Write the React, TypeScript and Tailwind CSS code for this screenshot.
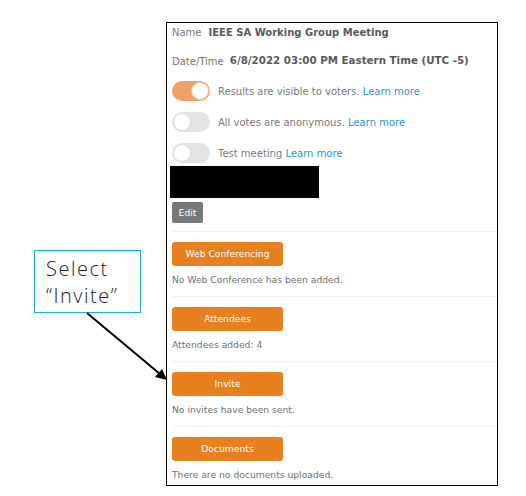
import React from 'react'

const font = { fontFamily: '"DejaVu Sans", Verdana, sans-serif' }

function Toggle({ on }: { on: boolean }) {
  return (
    <span
      className={
        on
          ? 'relative inline-block w-[38px] h-[20px] rounded-full bg-[#f2a066] shrink-0'
          : 'relative inline-block w-[38px] h-[20px] rounded-full bg-[#e3e3e3] shrink-0'
      }
    >
      <span
        className={
          on
            ? 'absolute top-[1px] right-[1px] w-[18px] h-[18px] rounded-full bg-white border border-[#f0c39d]'
            : 'absolute top-[1px] left-[1px] w-[18px] h-[18px] rounded-full bg-white border border-[#dedede]'
        }
      />
    </span>
  )
}

function ToggleRow({ on, label }: { on: boolean; label: string }) {
  return (
    <div className="flex items-center h-[20px] gap-[8px]">
      <Toggle on={on} />
      <span className="text-[10px] text-[#7a7a7a] whitespace-nowrap">
        {label} <span className="text-[#2a93e0]">Learn more</span>
      </span>
    </div>
  )
}

function Section({ title, note }: { title: string; note: string }) {
  return (
    <div className="ml-[5px] border-t border-[#efefef] pt-[10px] pb-[9px]">
      <button className="w-[111px] h-[24px] rounded-[3px] bg-[#e8801f] text-white text-[9.2px] block">
        {title}
      </button>
      <div className="mt-[7px] h-[14px] leading-[14px] text-[9.2px] text-[#707070] whitespace-nowrap">
        {note}
      </div>
    </div>
  )
}

export default function App() {
  return (
    <div className="relative w-[526px] h-[496px] bg-white flex" style={font}>
      <div className="pl-[34px] pt-[250px]">
        <div
          className="w-[107px] h-[63px] border border-[#1ab0d8] pl-[11px] pt-[4px] text-[20px] leading-[27px] text-[#222] font-light tracking-[1.5px]"
          style={{ fontFamily: '"Open Sans", sans-serif' }}
        >
          <div>Select</div>
          <div>“Invite”</div>
        </div>
      </div>

      <div className="ml-[25px] mt-[22px] w-[332px] h-[464px] border-[1.5px] border-black flex flex-col">
        <div className="pl-[5px]">
          <div className="flex items-center h-[18px] gap-[7px] text-[10px] whitespace-nowrap">
            <span className="text-[#777]">Name</span>
            <span className="font-bold text-[#5a5a5a]">IEEE SA Working Group Meeting</span>
          </div>
          <div className="flex items-center h-[20px] mt-[10px] gap-[6px] text-[10px] whitespace-nowrap">
            <span className="text-[#777]">Date/Time</span>
            <span className="font-bold text-[10.3px] text-[#5a5a5a]">6/8/2022 03:00 PM Eastern Time (UTC -5)</span>
          </div>
          <div className="mt-[10px] flex flex-col gap-[11px]">
            <ToggleRow on label="Results are visible to voters." />
            <ToggleRow on={false} label="All votes are anonymous." />
            <ToggleRow on={false} label="Test meeting" />
          </div>
          <div className="ml-[-2px] mt-[3px] w-[149px] h-[32px] bg-black" />
          <button className="mt-[4px] block w-[31px] h-[21px] rounded-[2px] bg-[#74797d] text-white text-[9.2px]">
            Edit
          </button>
          <div className="h-[8px]" />
        </div>
        <Section title="Web Conferencing" note="No Web Conference has been added." />
        <Section title="Attendees" note="Attendees added: 4" />
        <Section title="Invite" note="No invites have been sent." />
        <Section title="Documents" note="There are no documents uploaded." />
      </div>

      <svg className="absolute left-0 top-0 pointer-events-none" width="526" height="496">
        <line x1="87" y1="313" x2="160" y2="374" stroke="#000" strokeWidth="2" />
        <polygon points="167,380 155,377 162,369" fill="#000" />
      </svg>
    </div>
  )
}
